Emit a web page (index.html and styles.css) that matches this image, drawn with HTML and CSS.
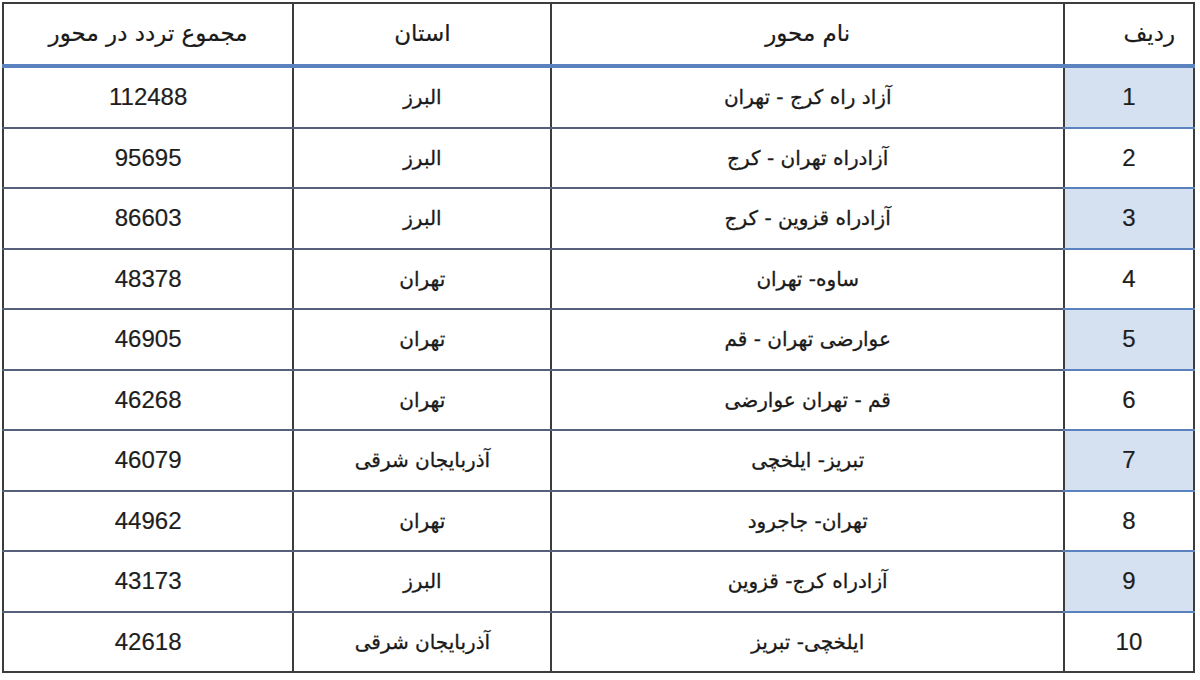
FILE: index.html
```html
<!DOCTYPE html>
<html lang="fa" dir="rtl">
<head>
<meta charset="utf-8">
<title>محورهای پرتردد</title>
<link rel="stylesheet" href="styles.css">
</head>
<body>
<div class="page">
<table class="traffic">
<colgroup>
<col class="c-row"><col class="c-name"><col class="c-prov"><col class="c-total">
</colgroup>
<thead>
<tr><th class="h-row">ردیف</th><th>نام محور</th><th>استان</th><th>مجموع تردد در محور</th></tr>
</thead>
<tbody>
<tr class="odd"><td class="num idx">1</td><td>آزاد راه کرج - تهران</td><td>البرز</td><td class="num">112488</td></tr>
<tr><td class="num idx">2</td><td>آزادراه تهران - کرج</td><td>البرز</td><td class="num">95695</td></tr>
<tr class="odd"><td class="num idx">3</td><td>آزادراه قزوین - کرج</td><td>البرز</td><td class="num">86603</td></tr>
<tr><td class="num idx">4</td><td>ساوه- تهران</td><td>تهران</td><td class="num">48378</td></tr>
<tr class="odd"><td class="num idx">5</td><td>عوارضی تهران - قم</td><td>تهران</td><td class="num">46905</td></tr>
<tr><td class="num idx">6</td><td>قم - تهران عوارضی</td><td>تهران</td><td class="num">46268</td></tr>
<tr class="odd"><td class="num idx">7</td><td>تبریز- ایلخچی</td><td>آذربایجان شرقی</td><td class="num">46079</td></tr>
<tr><td class="num idx">8</td><td>تهران- جاجرود</td><td>تهران</td><td class="num">44962</td></tr>
<tr class="odd"><td class="num idx">9</td><td>آزادراه کرج- قزوین</td><td>البرز</td><td class="num">43173</td></tr>
<tr><td class="num idx">10</td><td>ایلخچی- تبریز</td><td>آذربایجان شرقی</td><td class="num">42618</td></tr>
</tbody>
</table>
</div>
</body>
</html>
```
FILE: styles.css
```css
html, body {
  margin: 0;
  padding: 0;
  background: #ffffff;
}
.page {
  padding: 2px 5px 0 2px;
  width: 1193px;
}
.traffic {
  width: 1193px;
  border-collapse: collapse;
  table-layout: fixed;
  border: 2px solid #3c3c3c;
  font-family: "DejaVu Sans", "Noto Sans", sans-serif;
  font-size: 20px;
  color: #1a1a1a;
}
.c-row { width: 130px; }
.c-name { width: 512px; }
.c-prov { width: 258px; }
.c-total { width: 290px; }
.traffic th {
  height: 58px;
  font-weight: normal;
  font-size: 23px;
  text-align: center;
  vertical-align: middle;
  padding: 0 0 2px 0;
  border-left: 2px solid #3c3c3c;
  border-right: 2px solid #3c3c3c;
  border-bottom: 4px solid #5a82bf;
  -webkit-text-stroke: 0.2px #1a1a1a;
}
.traffic th.h-row {
  text-align: right;
  padding-right: 18px;
}
.traffic td {
  height: 58.5px;
  padding: 0;
  text-align: center;
  vertical-align: middle;
  border-left: 2px solid #3c3c3c;
  border-right: 2px solid #3c3c3c;
  border-bottom: 2px solid #56607a;
  -webkit-text-stroke: 0.3px #1a1a1a;
}
.traffic td.num {
  font-family: "Liberation Sans", Arial, sans-serif;
  font-size: 24px;
  color: #1e1e1e;
  -webkit-text-stroke: 0.2px #1e1e1e;
}
.traffic td.idx {
  border-bottom-color: #5a82bf;
}
.traffic tr.odd td.idx {
  background: #d5e0f1;
}
.traffic tbody tr:last-child td {
  border-bottom: 2px solid #3c3c3c;
}
```
